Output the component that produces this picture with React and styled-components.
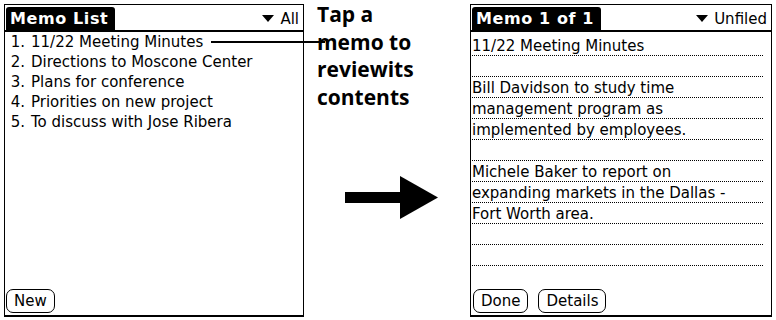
import React from 'react';
import styled, { createGlobalStyle } from 'styled-components';

const GlobalStyle = createGlobalStyle`
  html, body {
    margin: 0;
    padding: 0;
    background: #fff;
  }
  body {
    font-family: "DejaVu Sans", "Liberation Sans", sans-serif;
    color: #000;
  }
`;

const Page = styled.div`
  display: flex;
  align-items: flex-start;
  width: 776px;
  height: 320px;
  padding: 4px 4px 0 4px;
  box-sizing: border-box;
  position: relative;
`;

const Screen = styled.div`
  display: flex;
  flex-direction: column;
  width: ${(p) => p.width}px;
  height: 313px;
  box-sizing: border-box;
  border: 1px solid #000;
  border-bottom: 2px solid #000;
  flex-shrink: 0;
`;

const TitleBar = styled.div`
  display: flex;
  align-items: flex-end;
  justify-content: space-between;
  height: 27px;
  padding: 0 4px 0 1px;
  border-bottom: 2px solid #000;
  box-sizing: border-box;
`;

const TitleTab = styled.div`
  background: #000;
  color: #fff;
  font-weight: bold;
  font-size: 16px;
  height: 23px;
  line-height: 23px;
  padding: 0 7px 0 4px;
  border-radius: 3px 3px 0 0;
  letter-spacing: ${(p) => p.spacing || 0.6}px;
`;

const Category = styled.div`
  display: flex;
  align-items: center;
  gap: 6px;
  font-size: 15px;
  height: 23px;
`;

const Triangle = styled.span`
  width: 0;
  height: 0;
  border-left: 6px solid transparent;
  border-right: 6px solid transparent;
  border-top: 7px solid #000;
`;

const Body = styled.div`
  flex: 1;
  display: flex;
  flex-direction: column;
  padding: ${(p) => p.pad};
`;

const Spacer = styled.div`
  flex: 1;
`;

const MemoItem = styled.div`
  display: flex;
  height: 20px;
  align-items: center;
  font-size: 15px;
  white-space: nowrap;
`;

const ItemNum = styled.span`
  width: 20px;
  text-align: right;
  margin-right: 6px;
`;

const NoteLine = styled.div`
  height: 21px;
  box-sizing: border-box;
  margin-right: 8px;
  border-bottom: 1px dotted #000;
  font-size: 15px;
  line-height: 22px;
  white-space: nowrap;
`;

const ButtonRow = styled.div`
  display: flex;
  gap: 10px;
  padding: 0 0 2px 1px;
`;

const PalmButton = styled.div`
  font-size: 15px;
  height: 24px;
  line-height: 22px;
  box-sizing: border-box;
  padding: 0 7px;
  border: 1.5px solid #000;
  border-radius: 7px;
`;

const Callout = styled.div`
  font-family: "Open Sans", "DejaVu Sans", sans-serif;
  font-weight: bold;
  font-size: 21px;
  line-height: 27.5px;
  margin: -3px 0 0 13px;
  width: 120px;
  flex-shrink: 0;
`;

const ArrowBox = styled.div`
  align-self: flex-start;
  margin: 172px 0 0 -92px;
  width: 125px;
  flex-shrink: 0;
`;

const Leader = styled.div`
  position: absolute;
  left: 211px;
  top: 41px;
  width: 114px;
  height: 2px;
  background: #000;
`;

const memos = [
  '11/22 Meeting Minutes',
  'Directions to Moscone Center',
  'Plans for conference',
  'Priorities on new project',
  'To discuss with Jose Ribera',
];

const noteLines = [
  '11/22 Meeting Minutes',
  '',
  'Bill Davidson to study time',
  'management program as',
  'implemented by employees.',
  '',
  'Michele Baker to report on',
  'expanding markets in the Dallas -',
  'Fort Worth area.',
  '',
  '',
];

export default function App() {
  return (
    <>
      <GlobalStyle />
      <Page>
        <Screen width={300}>
          <TitleBar>
            <TitleTab>Memo List</TitleTab>
            <Category>
              <Triangle />
              All
            </Category>
          </TitleBar>
          <Body pad="0">
            {memos.map((m, i) => (
              <MemoItem key={i}>
                <ItemNum>{i + 1}.</ItemNum>
                {m}
              </MemoItem>
            ))}
            <Spacer />
            <ButtonRow>
              <PalmButton>New</PalmButton>
            </ButtonRow>
          </Body>
        </Screen>

        <Callout>
          Tap a<br />
          memo to<br />
          reviewits<br />
          contents
        </Callout>

        <ArrowBox>
          <svg width="95" height="44" viewBox="0 0 95 44">
            <rect x="0" y="16" width="56" height="11" fill="#000" />
            <polygon points="55,0 93,21.5 55,43" fill="#000" />
          </svg>
        </ArrowBox>

        <Screen width={302}>
          <TitleBar>
            <TitleTab spacing={0}>Memo 1 of 1</TitleTab>
            <Category>
              <Triangle />
              Unfiled
            </Category>
          </TitleBar>
          <Body pad="3px 0 0 1px">
            {noteLines.map((t, i) => (
              <NoteLine key={i}>{t}</NoteLine>
            ))}
            <Spacer />
            <ButtonRow>
              <PalmButton>Done</PalmButton>
              <PalmButton>Details</PalmButton>
            </ButtonRow>
          </Body>
        </Screen>

        <Leader />
      </Page>
    </>
  );
}
